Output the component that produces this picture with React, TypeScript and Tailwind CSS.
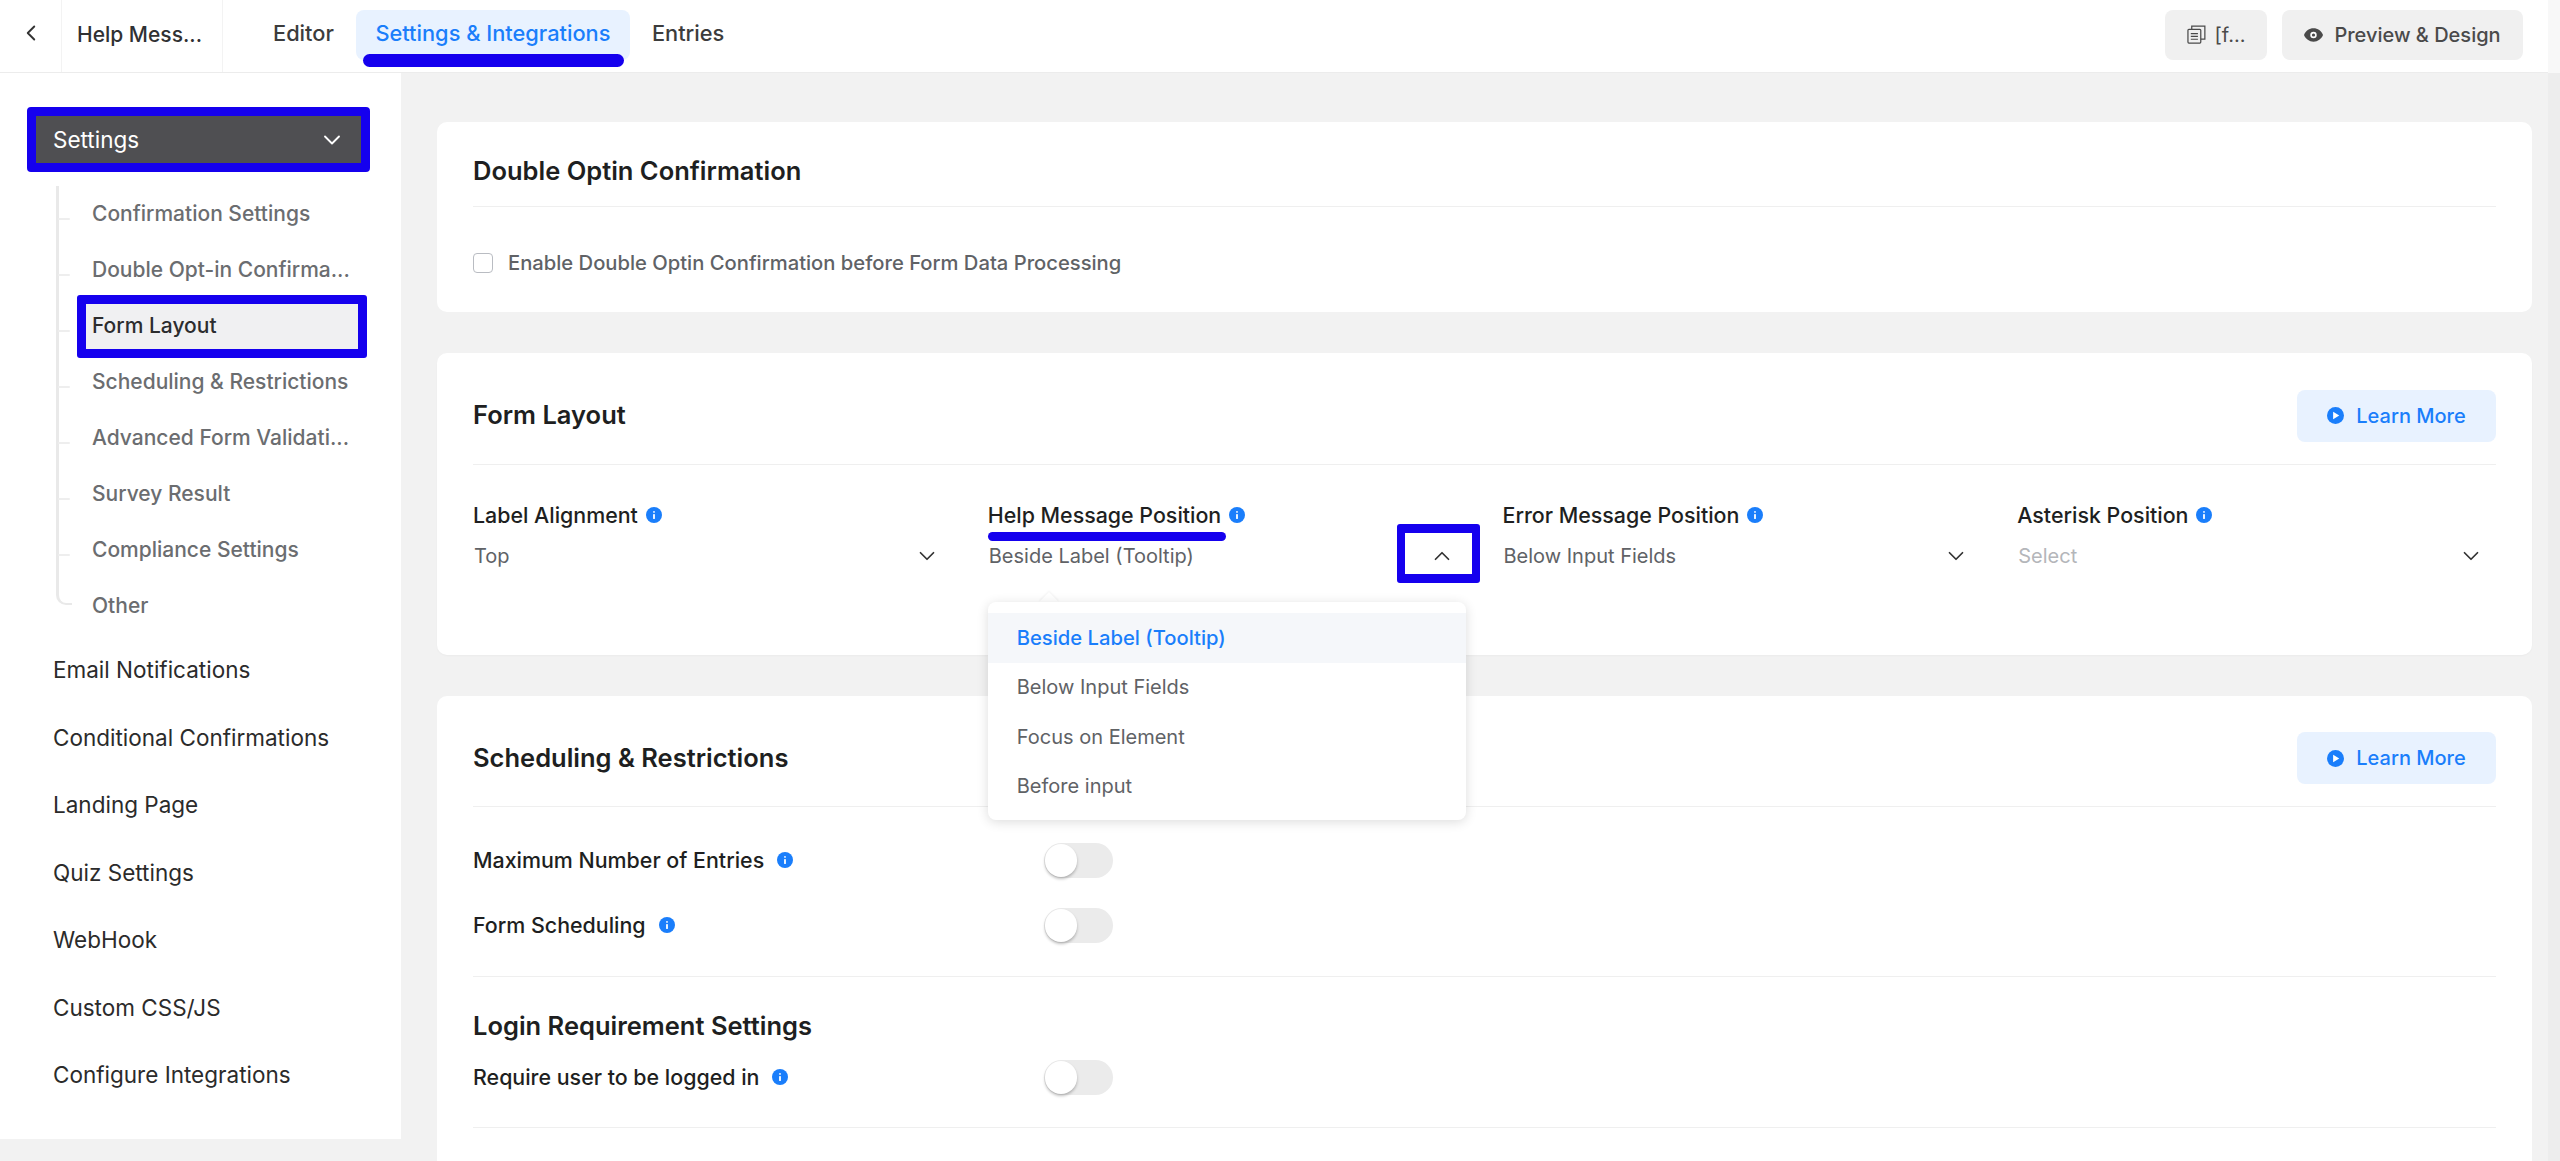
import { ChevronDown, ChevronLeft, ChevronUp } from 'lucide-react';

const tabs = ['Editor', 'Settings & Integrations', 'Entries'];

const subItems = [
  'Confirmation Settings',
  'Double Opt-in Confirma...',
  'Form Layout',
  'Scheduling & Restrictions',
  'Advanced Form Validati...',
  'Survey Result',
  'Compliance Settings',
  'Other',
];

const mainItems = [
  'Email Notifications',
  'Conditional Confirmations',
  'Landing Page',
  'Quiz Settings',
  'WebHook',
  'Custom CSS/JS',
  'Configure Integrations',
];

const layoutFields = [
  { label: 'Label Alignment', value: 'Top' },
  { label: 'Help Message Position', value: 'Beside Label (Tooltip)', open: true },
  { label: 'Error Message Position', value: 'Below Input Fields' },
  { label: 'Asterisk Position', value: 'Select', placeholder: true },
];

const helpOptions = ['Beside Label (Tooltip)', 'Below Input Fields', 'Focus on Element', 'Before input'];

function InfoIcon() {
  return (
    <svg viewBox="0 0 16 16" className="w-4 h-4 shrink-0">
      <circle cx="8" cy="8" r="8" fill="#1a7efb" />
      <rect x="7.1" y="7" width="1.8" height="5" rx="0.4" fill="#fff" />
      <rect x="7.1" y="4" width="1.8" height="1.8" rx="0.9" fill="#fff" />
    </svg>
  );
}

function PlayIcon() {
  return (
    <svg viewBox="0 0 18 18" className="w-[17px] h-[17px] shrink-0">
      <circle cx="9" cy="9" r="9" fill="#1a7efb" />
      <path d="M6.5 5 13 9l-6.5 4z" fill="#fff" />
    </svg>
  );
}

function CopyIcon() {
  return (
    <svg viewBox="0 0 20 20" className="w-[19px] h-[19px] shrink-0" fill="none" stroke="#4a4a4a" strokeWidth="1.3">
      <rect x="1" y="4.5" width="13.5" height="14.5" rx="1" />
      <path d="M5 4.5V1.2h13.8v13.6h-4.3" />
      <path d="M4 9h7.5M4 12h7.5M4 15h7.5" />
    </svg>
  );
}

function EyeIcon() {
  return (
    <svg viewBox="0 0 20 14" className="w-[19px] h-[14px] shrink-0">
      <path d="M10 0C5.5 0 1.7 2.8 0 7c1.7 4.2 5.5 7 10 7s8.3-2.8 10-7c-1.7-4.2-5.5-7-10-7z" fill="#4a4a4a" />
      <circle cx="10" cy="7" r="3.4" fill="#fff" />
      <circle cx="10" cy="7" r="1.7" fill="#4a4a4a" />
    </svg>
  );
}

function Toggle() {
  return (
    <div className="w-[69px] h-[35px] rounded-full bg-[#ebebeb] relative">
      <div className="absolute left-[1px] top-[1px] w-[32px] h-[33px] rounded-full bg-white shadow-[0_2px_3px_rgba(0,0,0,0.25)]" />
    </div>
  );
}

function LearnMore() {
  return (
    <button className="w-[199px] h-[52px] rounded-lg bg-[#e8f2ff] flex items-center justify-center gap-[12px] text-[20px] font-medium text-[#1a7efb]">
      <PlayIcon />
      Learn More
    </button>
  );
}

function ToggleRow({ label }: { label: string }) {
  return (
    <div className="flex items-center h-[35px]">
      <div className="w-[571px] flex items-center gap-[13px] text-[21.4px] font-medium text-[#1e1f21]">
        {label}
        <InfoIcon />
      </div>
      <Toggle />
    </div>
  );
}

export default function App() {
  return (
    <div className="h-[1161px] w-[2560px] overflow-hidden flex font-['Inter',sans-serif] bg-[#f2f2f2]">
      <div className="flex-1 min-w-0 flex flex-col">
        {/* Top bar */}
        <header className="h-[73px] bg-white border-b border-[#ececec] flex items-center shrink-0">
          <div className="w-[62px] h-full border-r border-[#f3f3f3] flex items-center justify-center pb-[6px]">
            <ChevronLeft className="w-[26px] h-[26px] text-[#333]" strokeWidth={1.75} />
          </div>
          <div className="w-[161px] h-full border-r border-[#f3f3f3] flex items-center pl-[15px] pb-[2px] text-[21px] font-medium text-[#303133]">
            Help Mess...
          </div>
          <nav className="flex items-center ml-[50px] pb-[3px]">
            {tabs.map((tab) => (
              <div
                key={tab}
                className={
                  tab === 'Settings & Integrations'
                    ? 'relative h-[50px] w-[274px] rounded-lg bg-[#e8f2ff] text-[#1a7efb] text-[21.8px] font-medium flex items-center justify-center pb-[3px] mx-[22px]'
                    : 'h-[50px] flex items-center pb-[3px] text-[21.8px] font-medium text-[#3c3c3c]'
                }
              >
                {tab}
                {tab === 'Settings & Integrations' && (
                  <span className="absolute left-[7px] top-[44px] w-[261px] h-[13px] rounded-full bg-[#1500ee]" />
                )}
              </div>
            ))}
          </nav>
          <div className="ml-auto flex items-center gap-[15px] pr-[25px] pb-[3px]">
            <button className="w-[102px] h-[50px] rounded-lg bg-[#f0f0f0] flex items-center justify-center gap-[9px] text-[20px] text-[#4a4a4a]">
              <CopyIcon />
              [f...
            </button>
            <button className="w-[241px] h-[50px] rounded-lg bg-[#f0f0f0] flex items-center justify-center gap-[11px] text-[20px] font-medium text-[#4a4a4a]">
              <EyeIcon />
              Preview & Design
            </button>
          </div>
        </header>

        <div className="flex flex-1 min-h-0">
          {/* Sidebar */}
          <aside className="w-[401px] h-[1066px] bg-white pt-[34px] shrink-0">
            <div className="ml-[27px] w-[343px] h-[65px] border-[9px] border-[#1500ee] rounded-[4px] bg-[#4f4f52] flex items-center justify-between pl-[17px] pr-[15px] text-[22.5px] text-white">
              Settings
              <ChevronDown className="w-[28px] h-[28px]" strokeWidth={1.6} />
            </div>
            <ul className="mt-[14px] ml-[56px] relative border-l-[3px] border-[#e9e9e9] h-[405px]">
              {subItems.map((item, i) => (
                <li key={item} className="h-[56px] flex items-center relative pl-[33px] text-[21px] font-medium text-[#6b6d70] whitespace-nowrap">
                  {i === subItems.length - 1 ? (
                    <span className="absolute left-[-3px] top-[13px] w-[16px] h-[14px] border-l-[3px] border-b-[2px] border-[#e9e9e9] rounded-bl-[10px]" />
                  ) : (
                    <span className="absolute left-[-1px] top-[32px] w-[12px] h-[2px] bg-[#eeeeee] rounded-full" />
                  )}
                  {item === 'Form Layout' ? (
                    <div className="ml-[-15px] w-[290px] h-[63px] shrink-0 border-[9px] border-[#1500ee] rounded-[3px] bg-[#f0f0f2] flex items-center pl-[6px] text-[#2c2c2e]">
                      {item}
                    </div>
                  ) : (
                    item
                  )}
                </li>
              ))}
            </ul>
            <ul className="mt-[45px]">
              {mainItems.map((item) => (
                <li key={item} className="h-[67.6px] flex items-center pl-[53px] text-[22.5px] text-[#2b2b2b]">
                  {item}
                </li>
              ))}
            </ul>
          </aside>

          {/* Main */}
          <main className="flex-1 min-w-0 pl-[36px] pr-[16px] pt-[49px] flex flex-col gap-[41px]">
            <section className="h-[190px] bg-white rounded-[10px] px-[36px]">
              <div className="h-[85px] pt-[15px] border-b border-[#efefef] flex items-center text-[25.5px] font-semibold text-[#1e1f21]">
                Double Optin Confirmation
              </div>
              <label className="mt-[41px] flex items-center gap-[15px] text-[20.2px] font-medium text-[#606266]">
                <span className="w-[20px] h-[20px] rounded-[4px] border border-[#b9bcc2] bg-white" />
                Enable Double Optin Confirmation before Form Data Processing
              </label>
            </section>

            <section className="h-[302px] bg-white rounded-[10px] px-[36px] relative z-10 shadow-[0_1px_2px_rgba(0,0,0,0.03)]">
              <div className="h-[112px] pt-[14px] border-b border-[#efefef] flex items-center justify-between text-[25.5px] font-semibold text-[#1e1f21]">
                Form Layout
                <LearnMore />
              </div>
              <div className="grid grid-cols-4 gap-[36px] pt-[38px]">
                {layoutFields.map((field) => (
                  <div key={field.label} className="relative">
                    <div className="h-[24px] flex items-center gap-[8px] text-[21.4px] font-medium text-[#1e1f21]">
                      {field.label}
                      <InfoIcon />
                    </div>
                    <div
                      className={`mt-[4px] h-[50px] flex items-center justify-between pl-[1px] pr-[12px] text-[20px] ${
                        field.placeholder ? 'text-[#b4b6ba]' : 'text-[#606266]'
                      }`}
                    >
                      {field.value}
                      {field.open ? (
                        <ChevronUp className="w-[26px] h-[26px] text-[#333]" strokeWidth={1.6} />
                      ) : (
                        <ChevronDown className="w-[26px] h-[26px] text-[#333]" strokeWidth={1.6} />
                      )}
                    </div>
                    {field.open && (
                      <>
                        <span className="absolute left-0 top-[29px] w-[238px] h-[9px] rounded-full bg-[#1500ee]" />
                        <span className="absolute left-[409px] top-[21px] w-[83px] h-[59px] border-x-[8px] border-y-[9px] border-[#1500ee] rounded-[3px]" />
                        <span className="absolute left-[54px] top-[92px] w-[14px] h-[14px] rotate-45 bg-white shadow-[-1px_-1px_2px_rgba(0,0,0,0.05)]" />
                        <ul className="absolute left-0 top-[99px] w-[478px] h-[218px] py-[11px] bg-white rounded-lg shadow-[0_2px_12px_rgba(0,0,0,0.14)]">
                          {helpOptions.map((option, i) => (
                            <li
                              key={option}
                              className={`h-[49.5px] flex items-center pl-[29px] ${
                                i === 0 ? 'bg-[#f5f7fa] text-[#1a7efb] font-medium text-[20.2px]' : 'text-[#606266] text-[20px]'
                              }`}
                            >
                              {option}
                            </li>
                          ))}
                        </ul>
                      </>
                    )}
                  </div>
                ))}
              </div>
            </section>

            <section className="bg-white rounded-t-[10px] px-[36px] flex-1">
              <div className="h-[111px] pt-[14px] border-b border-[#efefef] flex items-center justify-between text-[25.5px] font-semibold text-[#1e1f21]">
                Scheduling & Restrictions
                <LearnMore />
              </div>
              <div className="pt-[36px] pb-[33px] border-b border-[#efefef] flex flex-col gap-[30px]">
                <ToggleRow label="Maximum Number of Entries" />
                <ToggleRow label="Form Scheduling" />
              </div>
              <div className="pt-[34px] pb-[32px] border-b border-[#efefef]">
                <div className="h-[30px] flex items-center text-[25.5px] font-semibold text-[#1e1f21]">Login Requirement Settings</div>
                <div className="mt-[19px]">
                  <ToggleRow label="Require user to be logged in" />
                </div>
              </div>
            </section>
          </main>
        </div>
      </div>
      <div className="w-[12px] shrink-0 flex flex-col">
        <div className="h-[73px] bg-[#f8f8f8]" />
        <div className="flex-1 bg-[#ededed]" />
      </div>
    </div>
  );
}
